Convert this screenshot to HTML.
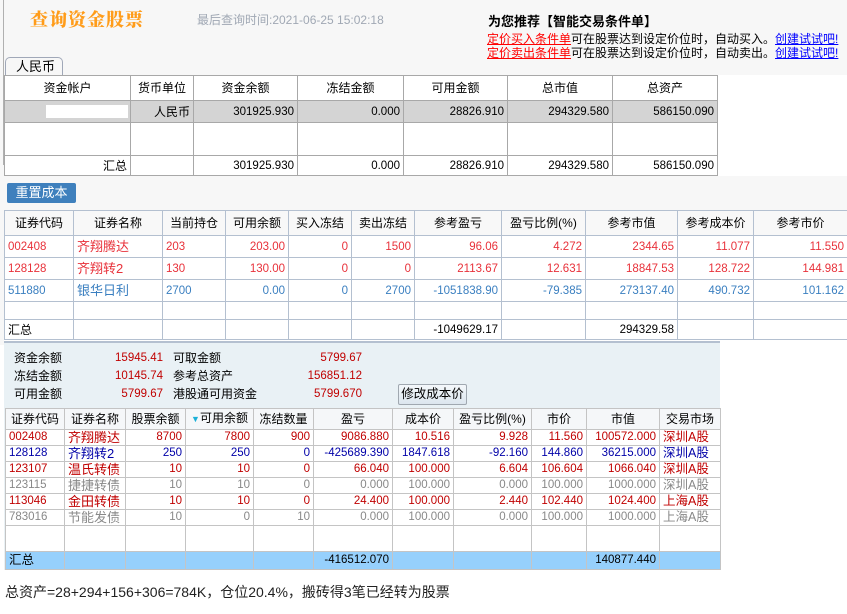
<!DOCTYPE html>
<html><head><meta charset="utf-8"><style>
*{margin:0;padding:0;box-sizing:border-box}
body{width:847px;height:614px;background:#fff;font-family:"Liberation Sans","Noto Sans CJK SC",sans-serif;font-size:12px;color:#000;position:relative;overflow:hidden}
.a{position:absolute}
table{border-collapse:collapse;table-layout:fixed;position:absolute}
td{overflow:hidden;white-space:nowrap;padding:0 3px;line-height:14px}
.r{text-align:right}.c{text-align:center}
.n{font-family:"Liberation Sans",sans-serif;font-size:11.5px}
#t1 td{border:1px solid #a8a8a8}
#t2 td{border:1px solid #b4c0d0}
#t3 td{border:1px solid #c4c4c4;line-height:13px}
.red{color:#e8313a}.blu{color:#3a7fc0}
.dr{color:#c00000}.db{color:#0000a8}.gr{color:#888}
</style></head><body>
<div class="a" style="left:0;top:0;width:847px;height:75px;background:#f7f7f7"></div>
<div class="a" style="left:0;top:75px;width:4px;height:270px;background:#f7f7f7"></div>
<div class="a" style="left:3px;top:0;width:1px;height:165px;background:#b0b0b0"></div>
<div class="a" style="left:30px;top:6px;font-family:'Noto Serif CJK SC',serif;font-weight:900;font-size:18px;color:#ff9c1a;letter-spacing:1px">查询资金股票</div>
<div class="a" style="left:197px;top:11px;color:#a0a8b4;font-size:12px">最后查询时间:2021-06-25 15:02:18</div>
<div class="a" style="left:488px;top:11px;font-weight:bold;font-size:13px">为您推荐【智能交易条件单】</div>
<div class="a" style="left:487px;top:32px;font-size:12px;line-height:14px;white-space:nowrap"><u style="color:#f00">定价买入条件单</u>可在股票达到设定价位时，自动买入。<u style="color:#00f">创建试试吧!</u></div>
<div class="a" style="left:487px;top:46px;font-size:12px;line-height:14px;white-space:nowrap"><u style="color:#f00">定价卖出条件单</u>可在股票达到设定价位时，自动卖出。<u style="color:#00f">创建试试吧!</u></div>
<div class="a" style="left:5px;top:57px;width:58px;height:19px;border:1px solid #a0a8b8;border-bottom:none;border-radius:5px 5px 0 0;background:#f7f7f7;padding-left:10px;font-size:13px;line-height:17px">人民币</div>
<div class="a" style="left:4px;top:75px;width:713px;height:1px;background:#a8a8a8"></div>

<table id="t1" style="left:4px;top:75px;width:713px">
<colgroup><col style="width:126px"><col style="width:63px"><col style="width:104px"><col style="width:106px"><col style="width:104px"><col style="width:105px"><col style="width:105px"></colgroup>
<tr style="height:25px;background:#fff" class="c"><td>资金帐户</td><td>货币单位</td><td>资金余额</td><td>冻结金额</td><td>可用金额</td><td>总市值</td><td>总资产</td></tr>
<tr style="height:22px;background:#d4d4d4"><td><div style="margin-left:38px;width:82px;height:13px;background:#fff"></div></td><td class="r">人民币</td><td class="r n">301925.930</td><td class="r n">0.000</td><td class="r n">28826.910</td><td class="r n">294329.580</td><td class="r n">586150.090</td></tr>
<tr style="height:33px"><td></td><td></td><td></td><td></td><td></td><td></td><td></td></tr>
<tr style="height:20px"><td class="r">汇总</td><td></td><td class="r n">301925.930</td><td class="r n">0.000</td><td class="r n">28826.910</td><td class="r n">294329.580</td><td class="r n">586150.090</td></tr>
</table>
<div class="a" style="left:0;top:176px;width:847px;height:34px;background:#f7f7f7"></div>
<div class="a" style="left:7px;top:183px;width:69px;height:20px;background:#3f80bd;border-radius:2px;color:#fff;font-size:13px;line-height:20px;text-align:center">重置成本</div>

<table id="t2" style="left:4px;top:210px;width:843px">
<colgroup><col style="width:69px"><col style="width:89px"><col style="width:63px"><col style="width:63px"><col style="width:63px"><col style="width:63px"><col style="width:87px"><col style="width:84px"><col style="width:92px"><col style="width:76px"><col style="width:94px"></colgroup>
<tr style="height:25px;background:#f8f8f8" class="c"><td>证券代码</td><td>证券名称</td><td>当前持仓</td><td>可用余额</td><td>买入冻结</td><td>卖出冻结</td><td>参考盈亏</td><td>盈亏比例(%)</td><td>参考市值</td><td>参考成本价</td><td>参考市价</td></tr>
<tr style="height:22px" class="red n"><td>002408</td><td style="font-size:13px">齐翔腾达</td><td>203</td><td class="r">203.00</td><td class="r">0</td><td class="r">1500</td><td class="r">96.06</td><td class="r">4.272</td><td class="r">2344.65</td><td class="r">11.077</td><td class="r">11.550</td></tr>
<tr style="height:22px" class="red n"><td>128128</td><td style="font-size:13px">齐翔转2</td><td>130</td><td class="r">130.00</td><td class="r">0</td><td class="r">0</td><td class="r">2113.67</td><td class="r">12.631</td><td class="r">18847.53</td><td class="r">128.722</td><td class="r">144.981</td></tr>
<tr style="height:22px" class="blu n"><td>511880</td><td style="font-size:13px">银华日利</td><td>2700</td><td class="r">0.00</td><td class="r">0</td><td class="r">2700</td><td class="r">-1051838.90</td><td class="r">-79.385</td><td class="r">273137.40</td><td class="r">490.732</td><td class="r">101.162</td></tr>
<tr style="height:18px"><td></td><td></td><td></td><td></td><td></td><td></td><td></td><td></td><td></td><td></td><td></td></tr>
<tr style="height:20px" class="n"><td style="font-size:12px">汇总</td><td></td><td></td><td></td><td></td><td></td><td class="r">-1049629.17</td><td></td><td class="r">294329.58</td><td></td><td></td></tr>
</table>

<div class="a" style="left:4px;top:341px;width:716px;height:229px;background:#e9f1f5;border-top:2px solid #b4c0d0"></div>
<div class="a" style="left:14px;top:349px;line-height:18px">资金余额<br>冻结金额<br>可用金额</div>
<div class="a r n" style="left:80px;width:83px;top:349px;line-height:18px;color:#c00000">15945.41<br>10145.74<br>5799.67</div>
<div class="a" style="left:173px;top:349px;line-height:18px">可取金额<br>参考总资产<br>港股通可用资金</div>
<div class="a r n" style="left:280px;width:82px;top:349px;line-height:18px;color:#c00000">5799.67<br>156851.12<br>5799.670</div>
<div class="a" style="left:398px;top:384px;width:69px;height:21px;border:1px solid #a0a8b0;border-radius:2px;background:linear-gradient(#f4f8fb,#dce6ee);text-align:center;line-height:19px;font-size:12.5px">修改成本价</div>

<table id="t3" style="left:5px;top:408px;width:715px">
<colgroup><col style="width:59px"><col style="width:61px"><col style="width:60px"><col style="width:68px"><col style="width:60px"><col style="width:79px"><col style="width:61px"><col style="width:78px"><col style="width:55px"><col style="width:73px"><col style="width:61px"></colgroup>
<tr style="height:21px;background:#f5f7f9" class="c"><td>证券代码</td><td>证券名称</td><td>股票余额</td><td><span style="color:#1ab0d8;font-size:9px">▼</span>可用余额</td><td>冻结数量</td><td>盈亏</td><td>成本价</td><td>盈亏比例(%)</td><td>市价</td><td>市值</td><td>交易市场</td></tr>
<tr style="height:16px;background:#fff" class="dr n"><td>002408</td><td style="font-size:13px">齐翔腾达</td><td class="r">8700</td><td class="r">7800</td><td class="r">900</td><td class="r">9086.880</td><td class="r">10.516</td><td class="r">9.928</td><td class="r">11.560</td><td class="r">100572.000</td><td style="font-size:12.5px">深圳A股</td></tr>
<tr style="height:16px;background:#fff" class="db n"><td>128128</td><td style="font-size:13px">齐翔转2</td><td class="r">250</td><td class="r">250</td><td class="r">0</td><td class="r">-425689.390</td><td class="r">1847.618</td><td class="r">-92.160</td><td class="r">144.860</td><td class="r">36215.000</td><td style="font-size:12.5px">深圳A股</td></tr>
<tr style="height:16px;background:#fff" class="dr n"><td>123107</td><td style="font-size:13px">温氏转债</td><td class="r">10</td><td class="r">10</td><td class="r">0</td><td class="r">66.040</td><td class="r">100.000</td><td class="r">6.604</td><td class="r">106.604</td><td class="r">1066.040</td><td style="font-size:12.5px">深圳A股</td></tr>
<tr style="height:16px;background:#fff" class="gr n"><td>123115</td><td style="font-size:13px">捷捷转债</td><td class="r">10</td><td class="r">10</td><td class="r">0</td><td class="r">0.000</td><td class="r">100.000</td><td class="r">0.000</td><td class="r">100.000</td><td class="r">1000.000</td><td style="font-size:12.5px">深圳A股</td></tr>
<tr style="height:16px;background:#fff" class="dr n"><td>113046</td><td style="font-size:13px">金田转债</td><td class="r">10</td><td class="r">10</td><td class="r">0</td><td class="r">24.400</td><td class="r">100.000</td><td class="r">2.440</td><td class="r">102.440</td><td class="r">1024.400</td><td style="font-size:12.5px">上海A股</td></tr>
<tr style="height:16px;background:#fff" class="gr n"><td>783016</td><td style="font-size:13px">节能发债</td><td class="r">10</td><td class="r">0</td><td class="r">10</td><td class="r">0.000</td><td class="r">100.000</td><td class="r">0.000</td><td class="r">100.000</td><td class="r">1000.000</td><td style="font-size:12.5px">上海A股</td></tr>
<tr style="height:26px;background:#fff"><td></td><td></td><td></td><td></td><td></td><td></td><td></td><td></td><td></td><td></td><td></td></tr>
<tr style="height:18px;background:#96d0fc" class="n"><td style="font-size:12.5px">汇总</td><td></td><td></td><td></td><td></td><td class="r">-416512.070</td><td></td><td></td><td></td><td class="r">140877.440</td><td></td></tr>
</table>

<div class="a" style="left:5px;top:582px;font-size:14px;color:#222;white-space:nowrap">总资产=28+294+156+306=784K，仓位20.4%，搬砖得3笔已经转为股票</div>
</body></html>
